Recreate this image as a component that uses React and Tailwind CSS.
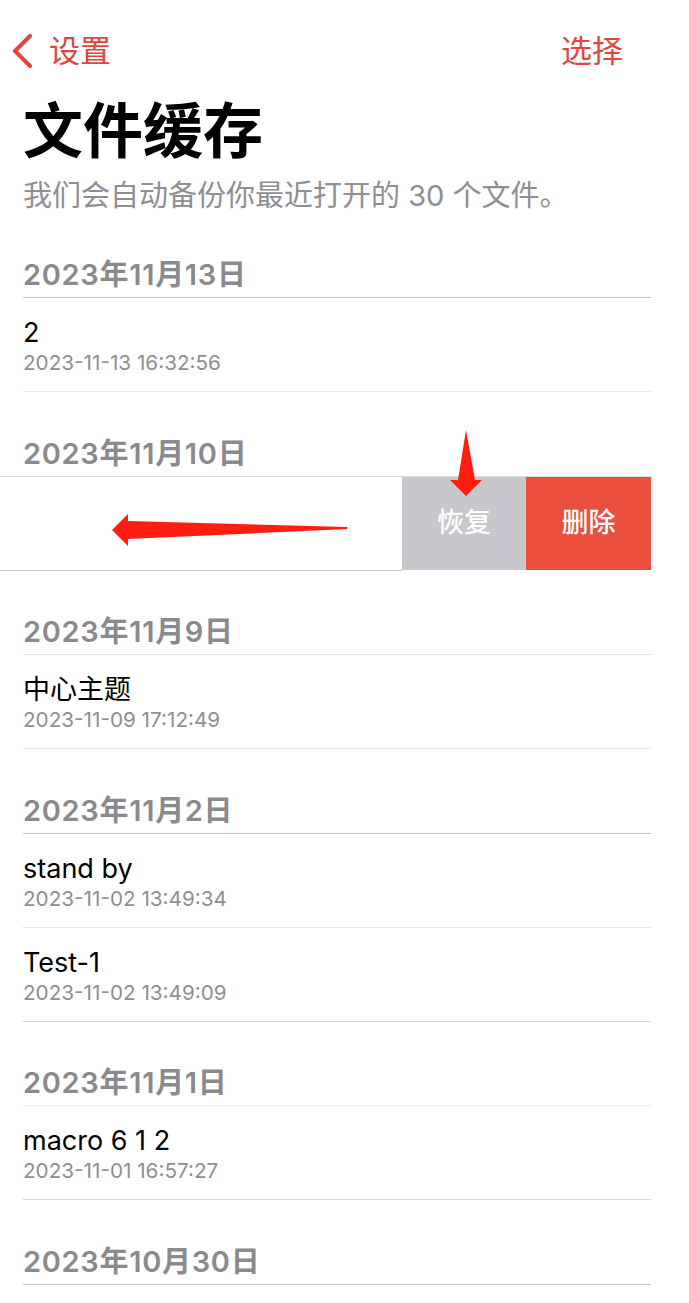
import React from "react";

const FONT = { fontFamily: 'Inter, "Noto Sans CJK SC", sans-serif' };

function Header({ text, line = "border-[#c8c8cc]", full = false }) {
  return (
    <div className={full ? "" : "pl-[23px] pr-[38px]"}>
      <div className={`pt-[43.3px] pb-[4px] border-b ${line} ${full ? "pl-[23px] mr-[38px]" : ""}`}>
        <div className="text-[29px] leading-[36px] font-semibold text-[#8a8a8e] tracking-[0.7px]">{text}</div>
      </div>
    </div>
  );
}

function Item({ title, date, line = "border-[#e6e6e8]" }) {
  return (
    <div className="pl-[23px] pr-[38px]">
      <div className={`pt-[18px] pb-[15.2px] border-b ${line}`}>
        <div className="text-[27px] leading-[34px] text-black">{title}</div>
        <div className="text-[20.7px] leading-[26px] text-[#8e8e93]">{date}</div>
      </div>
    </div>
  );
}

export default function App() {
  return (
    <div className="relative w-[689px] h-[1303px] bg-white overflow-hidden" style={FONT}>
      {/* Nav */}
      <div className="h-[101px] flex items-center justify-between pl-[12px] pr-[66px]">
        <div className="flex items-center text-[#e3443b]">
          <svg width="22" height="34" viewBox="0 0 22 34" className="mr-[15px]">
            <path d="M18 2 L3 17 L18 32" fill="none" stroke="#e3443b" strokeWidth="4" strokeLinecap="round" strokeLinejoin="round" />
          </svg>
          <span className="text-[31px] leading-[36px]">设置</span>
        </div>
        <span className="text-[31px] leading-[36px] text-[#e3443b]">选择</span>
      </div>

      {/* Title */}
      <div className="pl-[23px]">
        <div className="text-[60px] leading-[60px] font-bold text-black">文件缓存</div>
        <div className="mt-[17px] text-[29px] leading-[36px] text-[#8e8e93]">我们会自动备份你最近打开的 30 个文件。</div>
      </div>

      <Header text="2023年11月13日" line="border-[#c6c6c8]" />
      <Item title="2" date="2023-11-13 16:32:56" line="border-[#ececee]" />

      <Header text="2023年11月10日" line="border-[#dcdcde]" full />
      <div className="flex h-[94px]">
        <div className="flex-1 border-b border-[#c8c8cc]" />
        <div className="w-[124px] h-[93px] bg-[#c7c7cc] flex items-center justify-center text-white text-[27px] font-medium">恢复</div>
        <div className="w-[125px] h-[93px] bg-[#ea4e3d] flex items-center justify-center text-white text-[27px] font-medium">删除</div>
        <div className="w-[38px]" />
      </div>

      <Header text="2023年11月9日" line="border-[#e2e2e4]" />
      <Item title="中心主题" date="2023-11-09 17:12:49" line="border-[#e4e4e6]" />

      <Header text="2023年11月2日" line="border-[#c6c6c8]" />
      <Item title="stand by" date="2023-11-02 13:49:34" line="border-[#e6e6e8]" />
      <Item title="Test-1" date="2023-11-02 13:49:09" line="border-[#d6d6d8]" />

      <Header text="2023年11月1日" line="border-[#eeeeef]" />
      <Item title="macro 6 1 2" date="2023-11-01 16:57:27" line="border-[#dadadc]" />

      <Header text="2023年10月30日" line="border-[#c6c6c8]" />

      {/* Annotation arrows */}
      <svg className="absolute left-0 top-0 pointer-events-none" width="689" height="1303" viewBox="0 0 689 1303">
        <polygon points="466,430 475,480 482,480 466,496 450,480 458,480" fill="#ff1d12" />
        <polygon points="112,530 128,514 128,521 347,527 347,529 128,539 128,546" fill="#ff1d12" />
      </svg>
    </div>
  );
}
